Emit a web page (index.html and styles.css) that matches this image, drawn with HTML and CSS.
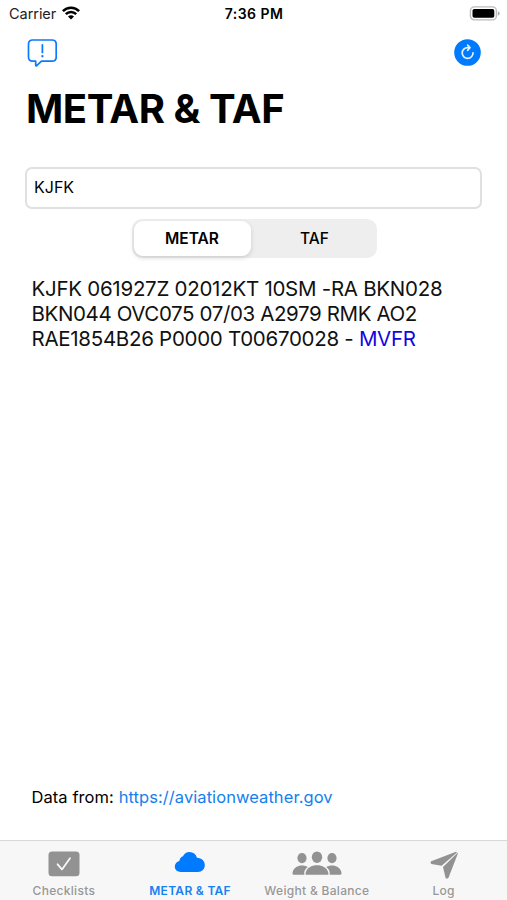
FILE: index.html
```html
<!DOCTYPE html>
<html lang="en">
<head>
<meta charset="utf-8">
<title>METAR &amp; TAF</title>
<link rel="stylesheet" href="styles.css">
</head>
<body>
<div class="app">
  <header class="status">
    <div class="carrier"><span>Carrier</span>
      <svg width="18" height="14" viewBox="0 0 18 14" fill="none" stroke="#000" stroke-width="2.5"><path d="M.9 5.2C5.4.6 12.6.6 17.1 5.2M3.8 8.1C6.7 5.2 11.3 5.2 14.2 8.1"/><path d="M9 13.6 6 10.6Q9 7.9 12 10.6Z" fill="#000" stroke="none"/></svg>
    </div>
    <div class="time">7:36 PM</div>
    <svg class="battery" width="31" height="15" viewBox="0 0 31 15"><rect x="1.4" y=".9" width="26" height="13" rx="4" fill="#fff" stroke="#bcbcbc" stroke-width="1.4"/><rect x="3.5" y="3" width="21.8" height="8.8" rx="1.8"/><path d="M28.9 5.2Q30.7 6 30.7 7.4T28.9 9.7Z" fill="#aaa"/></svg>
  </header>
  <nav class="toolbar">
    <svg width="30" height="29" viewBox="0 0 30 29" fill="none" stroke="#0a7aff" stroke-width="1.7" stroke-linejoin="round" stroke-linecap="round"><path d="M5.7 1H25Q29.2 1 29.2 5.2V18Q29.2 22.2 25 22.2H14.5L9.7 26.7Q8.7 27.4 8.7 26V22.2H5.7Q1.5 22.2 1.5 18V5.2Q1.5 1 5.7 1Z"/><path d="M15.4 6V13.4" stroke-width="1.8"/><path d="M15.4 17.2V17.3" stroke-width="2.3"/></svg>
    <svg width="27" height="27" viewBox="0 0 27 27" fill="none" stroke="#e4f1ff" stroke-width="1.7" stroke-linecap="round" stroke-linejoin="round"><circle cx="13.5" cy="13.5" r="13.3" fill="#007aff" stroke="none"/><path d="M13.6 8.6A5.4 5.4 0 1 0 19 13.9M13.4 8.6H15.6M13.6 6.1 16 8.7 13.6 11.3"/></svg>
  </nav>
  <main>
    <h1>METAR &amp; TAF</h1>
    <div class="field">KJFK</div>
    <div class="segments"><div class="segment selected">METAR</div><div class="segment">TAF</div></div>
    <p class="report"><span class="wind">KJFK 061927Z 02012KT 10SM -RA BKN028</span><br><span class="clouds">BKN044 OVC075 07/03 A2979 RMK AO2</span><br><span class="remarks">RAE1854B26 P0000 T00670028 - <b>MVFR</b></span></p>
    <p class="source">Data from: <a>https://aviationweather.gov</a></p>
  </main>
  <footer class="tabs">
    <div class="tab"><svg width="32" height="26" viewBox="0 0 32 26"><rect x=".5" y=".6" width="31" height="24.6" rx="3.5" fill="#929292"/><path d="M9.6 13.3 14 18.4 22 7.2" fill="none" stroke="#f7f7f7" stroke-width="1.8" stroke-linecap="round" stroke-linejoin="round"/></svg><span>Checklists</span></div>
    <div class="tab active"><svg width="32" height="26" viewBox="0 0 32 26"><path d="M6.8 21C3.2 21 .8 18.8 .8 15.6C.8 12.7 2.7 10.5 5.4 9.9C5.8 7.4 6.8 6.3 8.9 5.2C10.3 2.6 12.7 1 15.6 1C19.2 1 21.8 3.2 23 6.8C27.7 7 30.8 10 30.8 14C30.8 18 28 21 24 21Z" fill="#007aff"/></svg><span>METAR &amp; TAF</span></div>
    <div class="tab"><svg width="50" height="26" viewBox="0 0 50 26" fill="#929292"><ellipse cx="10" cy="7.1" rx="4.6" ry="5.1"/><ellipse cx="40" cy="7.1" rx="4.6" ry="5.1"/><ellipse cx="25" cy="6.2" rx="5.2" ry="5.8"/><path d="M14.3 23.8C13.1 23.8 13.5 22.4 13.8 21.2C15 17 19.4 14.3 25 14.3S35 17 36.2 21.2C36.5 22.4 36.9 23.8 35.7 23.8Z"/><path d="M12.3 23.7H1.7C.2 23.7.4 22.3.7 21C1.7 17 5.4 14.5 9.9 14.5C12.1 14.5 14.1 15 15.7 16C13.3 17.8 11.7 20.4 12.3 23.7ZM37.7 23.7H48.3C49.8 23.7 49.6 22.3 49.3 21C48.3 17 44.6 14.5 40.1 14.5C37.9 14.5 35.9 15 34.3 16C36.7 17.8 38.3 20.4 37.7 23.7Z"/></svg><span>Weight &amp; Balance</span></div>
    <div class="tab"><svg width="30" height="28" viewBox="0 0 30 28" fill="#929292"><path d="M2.2 10.3 27 .8 28 1.4 12.6 14.8 2.4 13Q.6 11.4 2.2 10.3Z"/><path d="M28.9 1.6 28.7 3 19.6 26.6Q18.2 28.5 16.6 27L14 16Z"/></svg><span>Log</span></div>
  </footer>
</div>
</body>
</html>
```
FILE: styles.css
```css
* { box-sizing: border-box; }
body { margin: 0; background: #fff; color: #000; font-family: Inter, "Liberation Sans", sans-serif; }
svg { display: block; flex: none; }
.app { width: 507px; height: 900px; display: flex; flex-direction: column; overflow: hidden; }
.status { height: 28px; padding: 0 7px 0 9px; display: grid; grid-template-columns: 1fr auto 1fr; align-items: center; font-size: 14.5px; }
.status > * { margin-top: -1px; }
.carrier { display: flex; align-items: center; gap: 6px; color: #222; }
.carrier span { letter-spacing: -.05px; }
.carrier svg { margin-top: -1px; }
.time { font-weight: 600; font-size: 14px; letter-spacing: .45px; margin-right: 1px; }
.status .battery { justify-self: end; margin-top: -2px; }
.toolbar { height: 53px; padding: 11px 26px 0 27px; display: flex; justify-content: space-between; }
main { flex: 1; display: flex; flex-direction: column; padding: 0 25px; }
h1 { margin: 0 0 0 1px; height: 86px; font-size: 40px; line-height: 56px; font-weight: 700; letter-spacing: -.45px; }
.field { height: 42px; border: 2px solid #e0e0e0; border-radius: 7px; padding: 0 7px; font-size: 16px; line-height: 37px; }
.segments { width: 245px; height: 39px; margin: 10px 0 0 106.5px; padding: 2px; display: flex; background: #eee; border-radius: 10px; }
.segment { flex: 1; text-align: center; font-size: 15.5px; line-height: 35px; font-weight: 500; padding-left: 4px; }
.selected { flex: 0 0 117px; background: #fff; border-radius: 9px; font-weight: 600; padding-left: 0; box-shadow: 0 2px 5px rgba(0,0,0,.14); }
.report { margin: 18px 0 0 6.5px; font-size: 20.5px; line-height: 25px; white-space: nowrap; color: #111; }
.wind { letter-spacing: -.27px; }
.clouds { letter-spacing: -.38px; }
.remarks { letter-spacing: -.29px; }
.report b { font-weight: 400; color: #1007df; }
.source { margin: auto 0 31px 6.5px; font-size: 16.5px; line-height: 24px; letter-spacing: .07px; white-space: nowrap; }
.source a { color: #1580ed; }
.tabs { height: 60px; border-top: 1px solid #d8d8d8; background: #f7f7f7; display: grid; grid-template-columns: repeat(4, 1fr); }
.tab { display: flex; flex-direction: column; align-items: center; padding-top: 10px; color: #979797; font-size: 12px; font-weight: 500; white-space: nowrap; }
.tab:first-child { padding-left: 1px; }
.tab svg { margin-bottom: auto; }
.tab span { line-height: 18px; letter-spacing: .3px; }
.tab.active { color: #1680f5; font-weight: 600; }
```
